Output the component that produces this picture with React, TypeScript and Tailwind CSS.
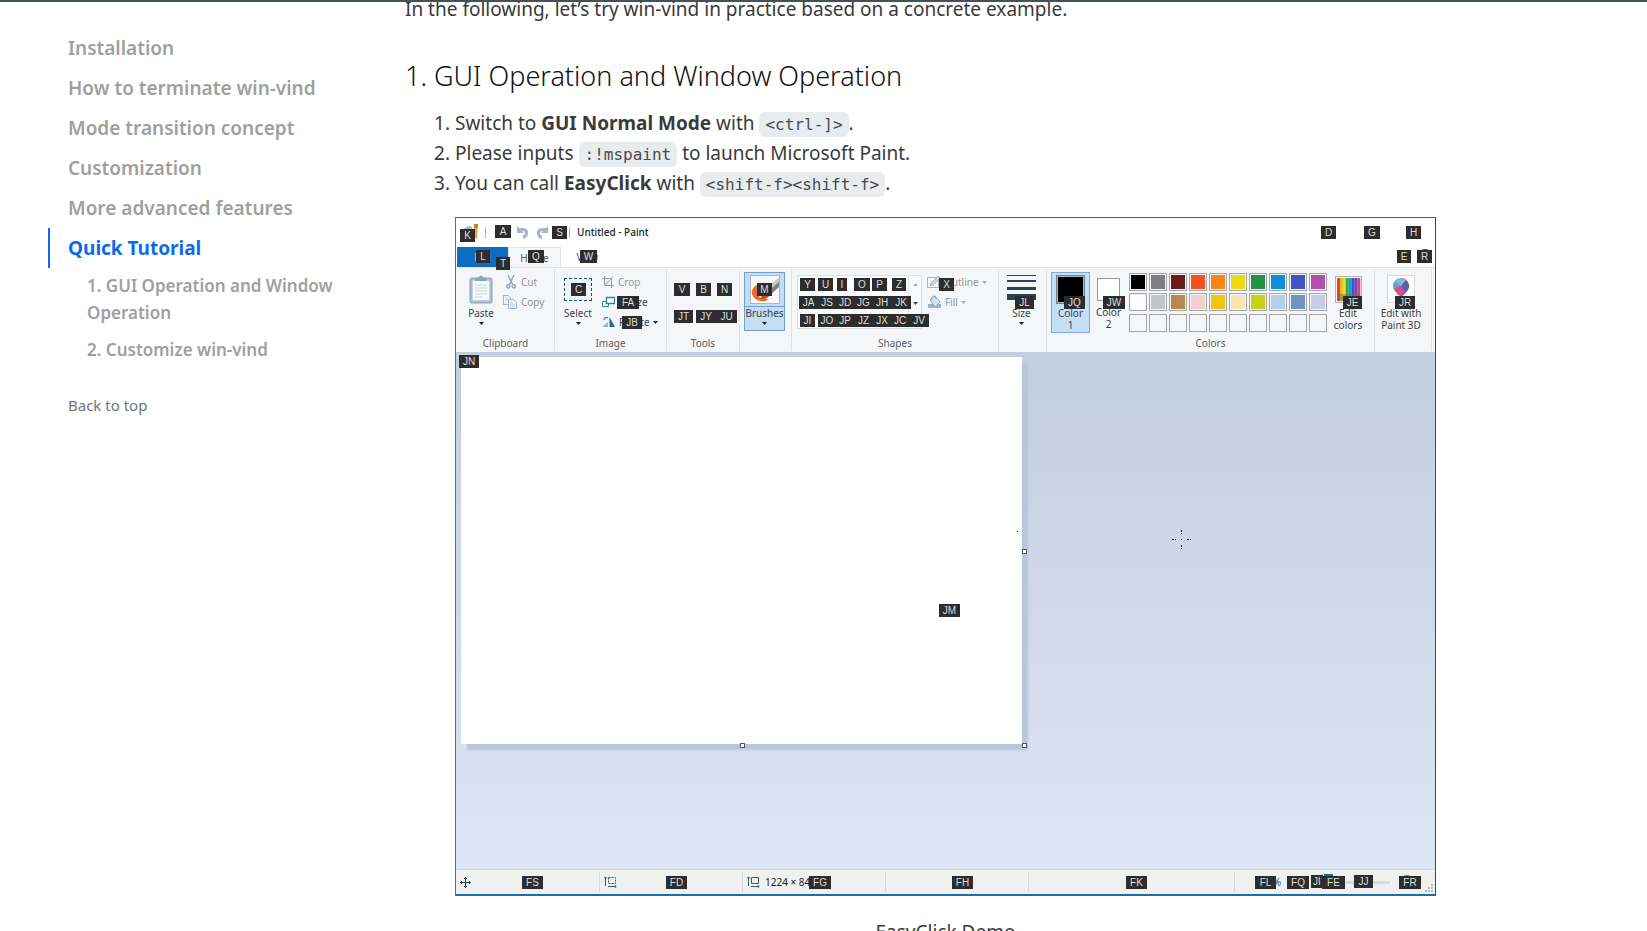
import type { ReactNode } from "react";

const navItems = [
  "Installation",
  "How to terminate win-vind",
  "Mode transition concept",
  "Customization",
  "More advanced features",
];

const hints: [string, string][] = [
  ["K", "left-[4px] top-[11px] w-[15px]"],
  ["A", "left-[39px] top-[7px] w-[16px]"],
  ["S", "left-[96px] top-[8px] w-[15px]"],
  ["L", "left-[20px] top-[32px] w-[14px]"],
  ["T", "left-[40px] top-[39px] w-[14px]"],
  ["Q", "left-[72px] top-[32px] w-[16px]"],
  ["W", "left-[124px] top-[32px] w-[17px]"],
  ["C", "left-[115px] top-[65px] w-[15px]"],
  ["FA", "left-[161px] top-[78px] w-[22px]"],
  ["JB", "left-[166px] top-[98px] w-[20px]"],
  ["JN", "left-[3px] top-[137px] w-[20px]"],
  ["V", "left-[218px] top-[65px] w-[16px]"],
  ["B", "left-[240px] top-[65px] w-[15px]"],
  ["N", "left-[261px] top-[65px] w-[15px]"],
  ["JT", "left-[218px] top-[92px] w-[19px]"],
  ["JY", "left-[240px] top-[92px] w-[20px]"],
  ["JU", "left-[260px] top-[92px] w-[21px]"],
  ["M", "left-[301px] top-[65px] w-[15px]"],
  ["Y", "left-[344px] top-[60px] w-[15px]"],
  ["U", "left-[362px] top-[60px] w-[15px]"],
  ["I", "left-[381px] top-[60px] w-[10px]"],
  ["O", "left-[398px] top-[60px] w-[16px]"],
  ["P", "left-[416px] top-[60px] w-[15px]"],
  ["Z", "left-[436px] top-[60px] w-[14px]"],
  ["JA", "left-[343px] top-[78px] w-[19px]"],
  ["JS", "left-[362px] top-[78px] w-[18px]"],
  ["JD", "left-[380px] top-[78px] w-[18px]"],
  ["JG", "left-[398px] top-[78px] w-[19px]"],
  ["JH", "left-[417px] top-[78px] w-[18px]"],
  ["JK", "left-[435px] top-[78px] w-[20px]"],
  ["JI", "left-[344px] top-[96px] w-[15px]"],
  ["JO", "left-[362px] top-[96px] w-[18px]"],
  ["JP", "left-[380px] top-[96px] w-[18px]"],
  ["JZ", "left-[398px] top-[96px] w-[19px]"],
  ["JX", "left-[417px] top-[96px] w-[18px]"],
  ["JC", "left-[435px] top-[96px] w-[18px]"],
  ["JV", "left-[453px] top-[96px] w-[20px]"],
  ["X", "left-[483px] top-[60px] w-[15px]"],
  ["JL", "left-[559px] top-[78px] w-[19px]"],
  ["JQ", "left-[608px] top-[78px] w-[21px]"],
  ["JW", "left-[647px] top-[78px] w-[22px]"],
  ["JE", "left-[887px] top-[78px] w-[19px]"],
  ["JR", "left-[939px] top-[78px] w-[20px]"],
  ["D", "right-[99px] top-[8px] w-[15px]"],
  ["G", "right-[55px] top-[8px] w-[16px]"],
  ["H", "right-[14px] top-[8px] w-[15px]"],
  ["E", "right-[24px] top-[32px] w-[14px]"],
  ["R", "right-[3px] top-[32px] w-[15px]"],
  ["JM", "left-[483px] top-[386px] w-[21px]"],
  ["FS", "left-[66px] bottom-[5px] w-[21px]"],
  ["FD", "left-[210px] bottom-[5px] w-[21px]"],
  ["FG", "left-[353px] bottom-[5px] w-[22px]"],
  ["FH", "left-[496px] bottom-[5px] w-[21px]"],
  ["FK", "left-[670px] bottom-[5px] w-[21px]"],
  ["FL", "right-[159px] bottom-[5px] w-[21px]"],
  ["FQ", "right-[126px] bottom-[5px] w-[22px]"],
  ["JI", "right-[112px] bottom-[6px] w-[12px]"],
  ["FE", "right-[90px] bottom-[5px] w-[23px]"],
  ["JJ", "right-[62px] bottom-[6px] w-[19px]"],
  ["FR", "right-[14px] bottom-[5px] w-[22px]"],
];

const swatches = [
  "bg-[#000000]", "bg-[#7f7f83]", "bg-[#6b1a1a]", "bg-[#f4511e]", "bg-[#fb8618]",
  "bg-[#ecd911]", "bg-[#1f9346]", "bg-[#0a8fdd]", "bg-[#4453c4]", "bg-[#ae52ab]",
  "bg-[#ffffff]", "bg-[#c2c5c6]", "bg-[#bd8550]", "bg-[#f3cfcd]", "bg-[#f3c312]",
  "bg-[#f5e6b4]", "bg-[#c6d117]", "bg-[#afd0e6]", "bg-[#7093bf]", "bg-[#c8cce4]",
  "bg-[#f4f6f8]", "bg-[#f4f6f8]", "bg-[#f4f6f8]", "bg-[#f4f6f8]", "bg-[#f4f6f8]",
  "bg-[#f4f6f8]", "bg-[#f4f6f8]", "bg-[#f4f6f8]", "bg-[#f4f6f8]", "bg-[#f4f6f8]",
];

function Arrow({ className = "text-[#222]" }: { className?: string }) {
  return (
    <svg viewBox="0 0 5 3" className={`h-[3px] w-[5px] ${className}`} aria-hidden="true">
      <path d="M0 0h5L2.5 3z" fill="currentColor" />
    </svg>
  );
}

function Group({ label, width, children }: { label: string; width: string; children: ReactNode }) {
  return (
    <div className={`my-px flex shrink-0 flex-col border-r border-[#dfe2e5] ${width}`}>
      <div className="flex h-[67px] pt-[3px]">{children}</div>
      <div className="text-center leading-[15px] text-[#5c5f63]">{label}</div>
    </div>
  );
}

function Code({ children }: { children: ReactNode }) {
  return (
    <code className="rounded-md bg-[#e9ecef] px-[6px] py-[3px] font-['DejaVu_Sans_Mono',monospace] text-[16px] leading-[19px] text-[#4a4a4a]">
      {children}
    </code>
  );
}

function PasteIcon() {
  return (
    <svg viewBox="0 0 24 29" className="h-[29px] w-[24px]" aria-hidden="true">
      <rect x="1" y="3" width="22" height="25" rx="1.5" fill="#a7bbd3" stroke="#8fa5c0" />
      <rect x="3.500" y="5.500" width="17" height="20" fill="#f7fafd" stroke="#c3d0df" />
      <path d="M7 4V2.500h3a2 2 0 0 1 4 0h3V4l1 2H6z" fill="#8da3bd" />
      <path d="M6 10h12M6 13h12M6 16h12M6 19h12M6 22h8" stroke="#c5d3e3" />
    </svg>
  );
}

function CutIcon() {
  return (
    <svg viewBox="0 0 10 14" className="h-[14px] w-[10px]" fill="none" stroke="#93a7bf" strokeWidth="1.500" aria-hidden="true">
      <path d="M2 0l4.500 9.500M8 0L3.500 9.500" />
      <circle cx="2.300" cy="11.300" r="1.600" />
      <circle cx="7.700" cy="11.300" r="1.600" />
    </svg>
  );
}

function CopyIcon() {
  return (
    <svg viewBox="0 0 14 14" className="h-[14px] w-[14px]" fill="#f1f5fa" stroke="#a3b3c7" aria-hidden="true">
      <path d="M.5.5h5l2 2v7h-7z" />
      <path d="M5.500 4.500h5l3 3v6h-8z" />
      <path d="M7 8h3M7 10h5M7 12h5M2 3h3M2 5h3" stroke="#c0ccdb" />
    </svg>
  );
}

function CropIcon() {
  return (
    <svg viewBox="0 0 12 12" className="h-[12px] w-[12px]" fill="none" stroke="#8f9fb3" aria-hidden="true">
      <path d="M2.500 0v9.500H12M0 2.500h9.500V12M3 9l8-8.500" />
    </svg>
  );
}

function ResizeIcon() {
  return (
    <svg viewBox="0 0 13 12" className="h-[12px] w-[13px]" fill="#fff" stroke="#337fa3" aria-hidden="true">
      <path d="M.5 5.500h6v5h-6z" />
      <path d="M4.500 1.500h8v6h-8z" strokeWidth="1.300" />
    </svg>
  );
}

function RotateIcon() {
  return (
    <svg viewBox="0 0 14 12" className="h-[12px] w-[14px]" aria-hidden="true">
      <path d="M0 11l6-5v5z" fill="#93b7cf" />
      <path d="M7.500 1v10H13z" fill="#286b92" />
      <path d="M2 4c0-2 2-3 4-2" fill="none" stroke="#3c83ad" strokeWidth="1.300" />
    </svg>
  );
}

function BrushIcon() {
  return (
    <svg viewBox="0 0 30 29" className="h-[29px] w-[30px]" aria-hidden="true">
      <rect x=".5" y=".5" width="29" height="28" fill="#f7f8fa" stroke="#a4b7ce" />
      <path d="M29 3v9L18 22l-5-5z" fill="#7d8188" />
      <path d="M29 3L14 14l3 3L29 7z" fill="#c5c9cf" />
      <path d="M12 8C4 10 1 15 2 19c2 6 8 8 14 7l3-2c-6 1-11-1-11-6 0-4 2-7 7-9z" fill="#ee6c1d" />
      <path d="M14 15l5 5c-1 4-5 5-9 4 2-2 2-6 4-9z" fill="#c8501a" />
    </svg>
  );
}

function OutlineIcon() {
  return (
    <svg viewBox="0 0 14 13" className="h-[13px] w-[14px]" fill="none" stroke="#a6b2c1" aria-hidden="true">
      <path d="M.5 1.500h11v10H.5z" fill="#f5f8fb" />
      <path d="M3 10l1-3 7-7 2 2-7 7z" fill="#ccd7e3" />
    </svg>
  );
}

function FillIcon() {
  return (
    <svg viewBox="0 0 15 14" className="h-[14px] w-[15px]" aria-hidden="true">
      <path d="M1 9h13v4H1z" fill="#9db4cf" />
      <path d="M3 5l5-4 5 6-5 5z" fill="#d8e2ee" stroke="#94a6bd" />
      <path d="M4 6c0-5 4-7 5-2" fill="none" stroke="#94a6bd" />
    </svg>
  );
}

function RainbowIcon() {
  const colors = ["#d9452c", "#efb51c", "#e4df2c", "#38a648", "#1a9bc4", "#2b5dc4", "#7345b2", "#c4458d"];
  return (
    <svg viewBox="0 0 27 27" className="h-[27px] w-[27px]" aria-hidden="true">
      <rect x=".5" y=".5" width="26" height="26" fill="#fff" stroke="#b1b5b9" />
      {colors.map((color, i) => (
        <rect key={color} x={2 + i * 2.9} y="2" width="3" height="23" fill={color} />
      ))}
      <path d="M2 18h23v7H2z" fill="#75665a" opacity=".45" />
    </svg>
  );
}

function Paint3DIcon() {
  return (
    <svg viewBox="0 0 28 28" className="h-[28px] w-[28px]" aria-hidden="true">
      <rect x=".5" y=".5" width="27" height="27" fill="#fdfefe" stroke="#d8dbde" />
      <path d="M14 3a8 8 0 0 0-8 8c0 5 5 7 8 12z" fill="#58a9d5" />
      <path d="M14 3a8 8 0 0 1 8 8c0 5-5 7-8 12z" fill="#6a58ab" />
      <path d="M7 14l7-4 7 5-4 5H11z" fill="#d4508f" />
      <path d="M8 6l6-3 5 2-5 6z" fill="#86b7d4" />
      <path d="M14 11l8-2v4l-4 4z" fill="#4868b9" />
    </svg>
  );
}

function UndoIcon({ flip = false }: { flip?: boolean }) {
  return (
    <svg viewBox="0 0 13 14" className={`h-[14px] w-[13px] ${flip ? "-scale-x-100" : ""}`} fill="none" aria-hidden="true">
      <path d="M3 4.500h3.500c3 0 4.500 1.500 4 4S9 12 7 12.500" stroke="#a7b5c8" strokeWidth="3.200" />
      <path d="M1 1v7h7z" fill="#a7b5c8" />
    </svg>
  );
}

function AppIcon() {
  return (
    <svg viewBox="0 0 18 17" className="h-[17px] w-[18px]" aria-hidden="true">
      <path d="M1 9c0-4 4-7 9-7l3 6-2 8H3z" fill="#9fb9cf" />
      <path d="M13 1l4 1-1 13-3-2z" fill="#e5ac3f" />
      <path d="M13 0h4v4h-4z" fill="#c77b37" />
    </svg>
  );
}

function SizeIcon({ dashed = false }: { dashed?: boolean }) {
  return (
    <svg viewBox="0 0 13 12" className="h-[12px] w-[13px]" fill="none" stroke="#385d73" aria-hidden="true">
      <path d="M1.500 1v9M0 2.500L1.500.8 3 2.500M4 10.500h8M10.500 9l1.700 1.500L10.500 12" />
      <path d="M4.500 1.500h7v6h-7z" strokeDasharray={dashed ? "2 1" : undefined} />
    </svg>
  );
}

function Ribbon() {
  return (
    <div className="flex h-[85px] overflow-hidden border-t border-[#e3e4e6] bg-[#f4f6f8] pl-px">
      <Group label="Clipboard" width="w-[98px]">
        <button className="ml-[8px] flex w-[32px] flex-col items-center pt-[3px]">
          <PasteIcon />
          <span className="mt-[2px] leading-[14px]">Paste</span>
          <Arrow className="mt-[2px] text-[#222]" />
        </button>
        <div className="ml-[6px] flex flex-col text-[#95989c]">
          <button className="flex h-[20px] items-center gap-[5px] pl-[3px]">
            <CutIcon />
            Cut
          </button>
          <button className="flex h-[20px] items-center gap-[4px]">
            <CopyIcon />
            Copy
          </button>
        </div>
      </Group>

      <Group label="Image" width="w-[112px]">
        <button className="ml-[6px] flex w-[34px] flex-col items-center pt-[6px]">
          <span className="h-[23px] w-[28px] border border-dashed border-[#1e5577] bg-[#edf3f8]" />
          <span className="mt-[5px] leading-[14px]">Select</span>
          <Arrow className="mt-[2px] text-[#222]" />
        </button>
        <div className="ml-[7px] flex flex-col">
          <button className="flex h-[20px] items-center gap-[4px] text-[#95989c]">
            <CropIcon />
            Crop
          </button>
          <button className="flex h-[20px] items-center gap-[3px]">
            <ResizeIcon />
            Resize
          </button>
          <button className="flex h-[20px] items-center gap-[3px]">
            <RotateIcon />
            Rotate
            <Arrow />
          </button>
        </div>
      </Group>

      <Group label="Tools" width="w-[73px]">
        <span />
      </Group>

      <div className="my-px w-[52px] shrink-0 border-r border-[#dfe2e5]">
        <button className="mx-[4px] mt-[3px] flex h-[59px] w-[41px] flex-col items-center border border-[#6f9fd0] bg-[#c5dcf5]">
          <span className="flex h-[34px] w-full items-center justify-center border-b border-[#6f9fd0]">
            <BrushIcon />
          </span>
          <span className="leading-[13px]">Brushes</span>
          <Arrow className="mt-[2px] text-[#222]" />
        </button>
      </div>

      <Group label="Shapes" width="w-[207px]">
        <div className="ml-[5px] mt-[3px] flex h-[54px] w-[125px] justify-end border border-[#dcdfe3] bg-[#fafbfc]">
          <div className="flex w-[13px] flex-col items-center justify-between border-l border-[#e1e3e6] py-[7px]">
            <Arrow className="rotate-180 text-[#a9adb2]" />
            <Arrow className="text-[#444]" />
            <span />
          </div>
        </div>
        <div className="ml-[5px] flex flex-col text-[#95989c]">
          <button className="flex h-[20px] items-center gap-[3px]">
            <OutlineIcon />
            Outline
            <Arrow className="text-[#a9adb2]" />
          </button>
          <button className="flex h-[20px] items-center gap-[3px]">
            <FillIcon />
            Fill
            <Arrow className="text-[#a9adb2]" />
          </button>
        </div>
      </Group>

      <div className="my-px flex w-[48px] shrink-0 justify-center border-r border-[#dfe2e5] pr-[2px]">
        <button className="flex w-[30px] flex-col items-center pt-[6px]">
          <svg viewBox="0 0 29 26" className="h-[26px] w-[29px]" aria-hidden="true">
            <path d="M0 0h29v1H0zM0 5h29v2H0zM0 12h29v3H0zM0 19h29v6H0z" fill="#264358" />
          </svg>
          <span className="mt-[5px] leading-[14px]">Size</span>
          <Arrow className="mt-[2px] text-[#222]" />
        </button>
      </div>

      <Group label="Colors" width="w-[328px]">
        <button className="ml-[4px] flex h-[61px] w-[39px] flex-col items-center border border-[#7eaadb] bg-[#c5dff9] pt-[2px]">
          <span className="h-[29px] w-[29px] border border-[#777f88] bg-black outline-1 -outline-offset-2 outline-[#aab6c4]" />
          <span className="mt-[3px] leading-[12px]">
            Color
            <br />1
          </span>
        </button>
        <button className="ml-[3px] flex w-[31px] flex-col items-center pt-[6px]">
          <span className="h-[23px] w-[23px] border border-[#999] bg-white" />
          <span className="mt-[5px] leading-[12px]">
            Color
            <br />2
          </span>
        </button>
        <div className="ml-[5px] mt-px grid h-[59px] grid-cols-10 grid-rows-3 gap-[2px]">
          {swatches.map((color, i) => (
            <button
              key={i}
              aria-label={`Swatch ${i + 1}`}
              className="h-[18px] w-[18px] border border-[#a3a5a8] bg-[#f4f6f8] p-px"
            >
              <span className={`block h-full w-full ${color}`} />
            </button>
          ))}
        </div>
        <button className="ml-[2px] flex w-[38px] flex-col items-center pt-[4px] leading-[12px]">
          <RainbowIcon />
          <span className="mt-[4px]">
            Edit
            <br />
            colors
          </span>
        </button>
      </Group>

      <div className="my-px flex w-[57px] shrink-0 justify-center border-r border-[#dfe2e5] pr-[4px]">
        <button className="flex flex-col items-center whitespace-nowrap pt-[6px] leading-[12px]">
          <Paint3DIcon />
          <span className="mt-[4px]">
            Edit with
            <br />
            Paint 3D
          </span>
        </button>
      </div>
    </div>
  );
}

function Handle({ place }: { place: string }) {
  return <span className={`absolute h-[5px] w-[5px] border border-[#555] bg-white ${place}`} />;
}

function PaintWindow() {
  return (
    <div className="relative border border-b-2 border-l-[#2a7fae] border-t-[#2b6c8c] border-r-[#1f4f6a] border-b-[#1670ac] bg-white font-['Noto_Sans',sans-serif] text-[10px] text-[#3b3e42]">
      <div className="flex h-[29px] items-center pb-[3px] pl-[5px] pt-[2px]">
        <AppIcon />
        <span className="ml-[6px] h-[11px] w-px bg-[#b5b5b5]" />
        <span className="ml-[30px] flex gap-[7px]">
          <UndoIcon />
          <UndoIcon flip />
        </span>
        <span className="ml-[20px] h-[11px] w-px bg-[#b5b5b5]" />
        <span className="ml-[7px] font-medium text-[#222]">Untitled - Paint</span>
      </div>

      <div className="flex h-[20px] pl-px leading-[20px]">
        <button className="w-[51px] bg-[#0f6cc6] text-white">File</button>
        <button className="w-[53px] border-x border-t border-[#e3e4e6] bg-[#f4f6f8] text-[#555]">Home</button>
        <button className="w-[53px] text-[#555]">View</button>
        <span className="ml-auto mr-[3px] mt-[2px] h-[14px] w-[14px] rounded-full bg-[#333]" />
      </div>

      <Ribbon />

      <div className="relative h-[517px] bg-linear-to-b from-[#c2cfdf] via-[#cfd9e9] to-[#dce6f4] pl-[5px] pt-[5px]">
        <div className="h-[387px] w-[561px] bg-white shadow-[6px_6px_2px_#b8c6da]" />
        <Handle place="left-[566px] top-[197px]" />
        <Handle place="left-[566px] top-[391px]" />
        <Handle place="left-[284px] top-[391px]" />
        <span className="absolute left-[561px] top-[179px] h-px w-px bg-black" />
        <svg viewBox="0 0 19 19" className="absolute left-[716px] top-[178px] h-[19px] w-[19px]" stroke="#222" fill="none" aria-hidden="true">
          <path d="M9.500 0v4M9.500 15v4M0 9.500h4M15 9.500h4" strokeDasharray="2 1" />
          <path d="M9 9.500h1" stroke="#000" />
        </svg>
      </div>

      <div className="flex h-[25px] items-center border-t border-[#d2d6dc] bg-[#f0f0ef] pl-px *:h-[20px]">
        <div className="flex w-[143px] items-center border-r border-[#d9d9d9] pl-[3px]">
          <svg viewBox="0 0 11 11" className="h-[11px] w-[11px]" fill="none" stroke="#2e4a5c" aria-hidden="true">
            <path d="M5.500 0v11M0 5.500h11M4 2L5.500.5 7 2M4 9l1.500 1.500L7 9M2 4L.5 5.500 2 7M9 4l1.500 1.500L9 7" />
          </svg>
        </div>
        <div className="flex w-[143px] items-center border-r border-[#d9d9d9] pl-[4px]">
          <SizeIcon dashed />
        </div>
        <div className="flex w-[143px] items-center gap-[5px] whitespace-nowrap border-r border-[#d9d9d9] pl-[4px] text-[#222]">
          <SizeIcon />
          1224 × 848px
        </div>
        <div className="w-[143px] border-r border-[#d9d9d9]" />
        <div className="w-[206px] border-r border-[#d9d9d9]" />
        <div className="ml-auto flex items-center pr-[21px]">
          <span className="mr-[12px]">100%</span>
          <span className="h-[13px] w-[13px] rounded-full bg-[#666]" />
          <input
            type="range"
            aria-label="Zoom"
            defaultValue={18}
            className="ml-[6px] mr-[10px] h-[3px] w-[78px] appearance-none bg-[#dadbdc] [&::-webkit-slider-thumb]:mb-[4px] [&::-webkit-slider-thumb]:h-[13px] [&::-webkit-slider-thumb]:w-[9px] [&::-webkit-slider-thumb]:appearance-none [&::-webkit-slider-thumb]:bg-[#1670a4]"
          />
          <span className="h-[14px] w-[14px] rounded-full bg-[#666]" />
        </div>
      </div>
      <svg viewBox="0 0 8 8" className="absolute bottom-[2px] right-[2px] h-[8px] w-[8px]" fill="#bbb" aria-hidden="true">
        <path d="M6 0h2v2H6zM3 3h2v2H3zM6 3h2v2H6zM0 6h2v2H0zM3 6h2v2H3zM6 6h2v2H6z" />
      </svg>

      {hints.map(([label, place]) => (
        <kbd
          key={label + place}
          className={`absolute h-[13px] overflow-hidden bg-[#2d2d2d] text-center font-['Liberation_Sans',sans-serif] text-[10px] leading-[13px] text-[#dedede] ${place}`}
        >
          {label}
        </kbd>
      ))}
    </div>
  );
}

export default function App() {
  return (
    <div className="flex h-screen overflow-hidden border-t-2 border-[#455159] bg-white font-['Noto_Sans',sans-serif] text-[#3a3a3a]">
      <aside className="w-[405px] shrink-0 pl-[48px] pr-[60px] pt-[26px]">
        <nav aria-label="Table of contents">
          <ul className="text-[19px] font-semibold text-[#9f9f9f]">
            {navItems.map((item) => (
              <li key={item}>
                <a href="#top" className="block border-l-2 border-transparent pl-[18px] leading-[40px]">
                  {item}
                </a>
              </li>
            ))}
            <li>
              <a href="#tutorial" className="block border-l-2 border-[#0d6ae8] pl-[18px] font-bold leading-[40px] text-[#0d6ae8]">
                Quick Tutorial
              </a>
              <ul className="flex flex-col gap-[2px] pl-[39px] text-[17px] leading-[27px]">
                <li>
                  <a href="#gui" className="block py-[4px]">
                    1. GUI Operation and Window Operation
                  </a>
                </li>
                <li>
                  <a href="#customize" className="block py-[4px]">
                    2. Customize win-vind
                  </a>
                </li>
              </ul>
            </li>
          </ul>
        </nav>
        <a href="#top" className="mt-[26px] block pl-[20px] text-[15px] leading-[24px] text-[#6c757d]">
          Back to top
        </a>
      </aside>

      <main id="tutorial" className="mr-[60px] min-w-0 max-w-[1031px] flex-1 text-[19px] leading-[30px]">
        <p className="-mt-[8px]">In the following, let’s try win-vind in practice based on a concrete example.</p>
        <h3 id="gui" className="mt-[35px] text-[27px] font-light leading-[34px] text-[#111]">
          1. GUI Operation and Window Operation
        </h3>
        <ol className="mt-[15px] list-decimal pl-[50px]">
          <li>
            Switch to <strong>GUI Normal Mode</strong> with <Code>&lt;ctrl-]&gt;</Code>.
          </li>
          <li>
            Please inputs <Code>:!mspaint</Code> to launch Microsoft Paint.
          </li>
          <li>
            You can call <strong>EasyClick</strong> with <Code>&lt;shift-f&gt;&lt;shift-f&gt;</Code>.
            <figure className="mt-[19px]">
              <PaintWindow />
              <figcaption className="mt-[21px] text-center">EasyClick Demo</figcaption>
            </figure>
          </li>
        </ol>
      </main>
    </div>
  );
}
